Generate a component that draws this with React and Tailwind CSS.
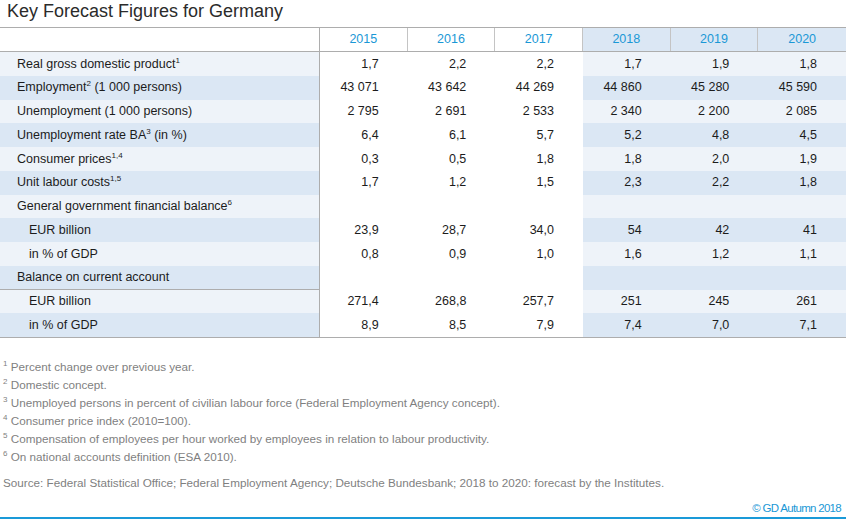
import React from "react";

const LIGHT = "bg-[#eef3f9]";
const DARK = "bg-[#dbe7f4]";

const Sup = ({ children }) => (
  <sup className="text-[8px] top-[-5px]">{children}</sup>
);

const rows = [
  { label: <>Real gross domestic product<Sup>1</Sup></>, vals: ["1,7", "2,2", "2,2", "1,7", "1,9", "1,8"] },
  { label: <>Employment<Sup>2</Sup> (1 000 persons)</>, vals: ["43 071", "43 642", "44 269", "44 860", "45 280", "45 590"] },
  { label: <>Unemployment (1 000 persons)</>, vals: ["2 795", "2 691", "2 533", "2 340", "2 200", "2 085"] },
  { label: <>Unemployment rate BA<Sup>3</Sup> (in %)</>, vals: ["6,4", "6,1", "5,7", "5,2", "4,8", "4,5"] },
  { label: <>Consumer prices<Sup>1,4</Sup></>, vals: ["0,3", "0,5", "1,8", "1,8", "2,0", "1,9"] },
  { label: <>Unit labour costs<Sup>1,5</Sup></>, vals: ["1,7", "1,2", "1,5", "2,3", "2,2", "1,8"] },
  { label: <>General government financial balance<Sup>6</Sup></>, vals: ["", "", "", "", "", ""] },
  { label: <>EUR billion</>, indent: true, vals: ["23,9", "28,7", "34,0", "54", "42", "41"] },
  { label: <>in % of GDP</>, indent: true, vals: ["0,8", "0,9", "1,0", "1,6", "1,2", "1,1"] },
  { label: <>Balance on current account</>, divider: true, vals: ["", "", "", "", "", ""] },
  { label: <>EUR billion</>, indent: true, vals: ["271,4", "268,8", "257,7", "251", "245", "261"] },
  { label: <>in % of GDP</>, indent: true, vals: ["8,9", "8,5", "7,9", "7,4", "7,0", "7,1"] },
];

const years = ["2015", "2016", "2017", "2018", "2019", "2020"];

const notes = [
  ["1", "Percent change over previous year."],
  ["2", "Domestic concept."],
  ["3", "Unemployed persons in percent of civilian labour force (Federal Employment Agency concept)."],
  ["4", "Consumer price index (2010=100)."],
  ["5", "Compensation of employees per hour worked by employees in relation to labour productivity."],
  ["6", "On national accounts definition (ESA 2010)."],
];

export default function App() {
  return (
    <div className="w-[846px] h-[519px] bg-white overflow-hidden font-['Liberation_Sans',Arial,sans-serif] flex flex-col">
      <div className="h-[27px] pl-[7px] text-[18px] leading-[22px] text-[#2b2b2b]">
        Key Forecast Figures for Germany
      </div>

      {/* header */}
      <div className="grid grid-cols-[320px_repeat(6,minmax(0,1fr))] h-[25px] border-y border-[#adadad] text-[12.5px] text-[#1a98d6]">
        <div className="border-r border-[#adadad]" />
        {years.map((y, i) => (
          <div
            key={y}
            className={`flex items-center justify-center ${i < 5 ? "border-r border-[#c4c4c4]" : ""} ${i >= 3 ? DARK : ""}`}
          >
            {y}
          </div>
        ))}
      </div>

      {/* body */}
      <div className="border-b border-[#adadad] text-[12.5px] text-[#1c1c1c]">
        {rows.map((r, ri) => {
          const bg = ri % 2 === 0 ? LIGHT : DARK;
          return (
            <div key={ri} className="grid grid-cols-[320px_repeat(6,minmax(0,1fr))] h-[23.75px]">
              <div
                className={`flex items-center whitespace-nowrap border-r border-[#adadad] ${bg} ${r.indent ? "pl-[29px]" : "pl-[17px]"} ${r.divider ? "border-b" : ""}`}
              >
                <span>{r.label}</span>
              </div>
              {r.vals.map((v, vi) => (
                <div
                  key={vi}
                  className={`flex items-center justify-end pr-[29px] ${vi >= 3 ? bg : ""}`}
                >
                  {v}
                </div>
              ))}
            </div>
          );
        })}
      </div>

      {/* footnotes */}
      <div className="mt-[20px] text-[11.7px] leading-[18px] text-[#7f7f7f]">
        {notes.map(([n, t]) => (
          <div key={n} className="pl-[3px] whitespace-nowrap">
            <Sup>{n}</Sup> {t}
          </div>
        ))}
      </div>
      <div className="mt-[8px] pl-[3px] text-[11.7px] leading-[18px] text-[#7f7f7f] whitespace-nowrap">
        Source: Federal Statistical Office; Federal Employment Agency; Deutsche Bundesbank; 2018 to 2020: forecast by the Institutes.
      </div>
      <div className="mt-[7px] pr-[5px] text-right text-[11.5px] leading-[18px] tracking-[-0.7px] text-[#1a98d6]">
        © GD Autumn 2018
      </div>
      <div className="h-[2px] bg-[#1a9ad8]" />
    </div>
  );
}
